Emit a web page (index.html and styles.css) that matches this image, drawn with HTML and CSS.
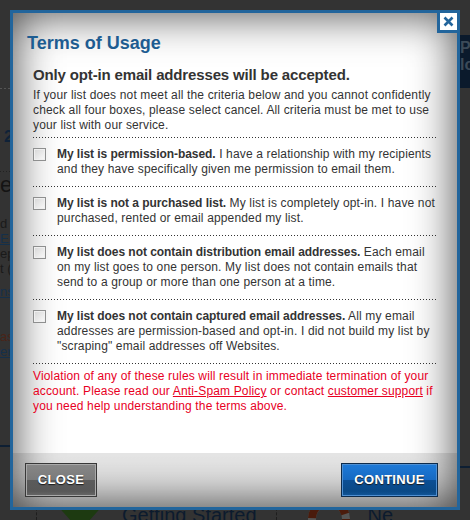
FILE: index.html
```html
<!DOCTYPE html>
<html lang="en">

<head>
    <meta charset="UTF-8">
    <meta name="viewport" content="width=device-width, initial-scale=1.0">
    <title>Terms of Usage</title>
    <link rel="stylesheet" href="styles.css">
</head>

<body>
    <!-- page under the dialog (dimmed) -->
    <div class="page">
        <div class="page-main">
            <div class="side">
                <div class="side-rule"></div>
                <div class="side-num">2 Campaigns</div>
                <div class="side-rule side-rule-dark"></div>
                <div class="side-title">essages</div>
                <p class="side-text">d them to your<br><a href="#">Export</a> list<br>ep a copy<br>t (see</p>
                <p class="side-text side-link"><a href="#">nstructions</a></p>
                <p class="side-text side-warn">ased lists are not<br><a href="#">ermission</a></p>
                <div class="side-rule side-rule-navy"></div>
            </div>
            <div class="aside">
                <div class="promo">P<br>lo</div>
                <div class="aside-rule"></div>
            </div>
        </div>
        <div class="page-foot">
            <span class="foot-sep"></span>
            <svg class="foot-arrow" width="50" height="30" viewBox="0 0 50 30">
                <polygon points="0,0 50,0 25,28" fill="#1d3a11" />
            </svg>
            <span class="foot-title">Getting Started</span>
            <span class="foot-sep foot-sep-2"></span>
            <svg class="foot-ring" width="44" height="44" viewBox="0 0 44 44">
                <circle cx="22" cy="22" r="17" fill="none" stroke="#555" stroke-width="8" />
                <circle cx="22" cy="22" r="17" fill="none" stroke="#4a1b0c" stroke-width="8"
                    stroke-dasharray="20 7" />
            </svg>
            <span class="foot-title">Ne</span>
        </div>
    </div>

    <!-- dialog -->
    <div class="modal">
        <a href="#" class="modal-x">
            <svg width="17" height="17" viewBox="0 0 17 17">
                <path d="M4.5 4.5 L12.5 12.5 M12.5 4.5 L4.5 12.5" stroke="#22659c" stroke-width="2.6" />
            </svg>
        </a>
        <div class="modal-body">
            <h2 class="modal-title">Terms of Usage</h2>
            <div class="terms">
                <h3 class="terms-lead">Only opt-in email addresses will be accepted.</h3>
                <p class="terms-intro">If your list does not meet all the criteria below and you cannot confidently
                    check all four boxes, please select cancel. All criteria must be met to use your list with our
                    service.</p>
                <label class="terms-item">
                    <input type="checkbox">
                    <span><b>My list is permission-based.</b> I have a relationship with my recipients and they have
                        specifically given me permission to email them.</span>
                </label>
                <label class="terms-item">
                    <input type="checkbox">
                    <span><b>My list is not a purchased list.</b> My list is completely opt-in. I have not
                        purchased, rented or email appended my list.</span>
                </label>
                <label class="terms-item">
                    <input type="checkbox">
                    <span><b>My list does not contain distribution email addresses.</b> Each email on my list goes
                        to one person. My list does not contain emails that send to a group or more than one person
                        at a time.</span>
                </label>
                <label class="terms-item">
                    <input type="checkbox">
                    <span><b>My list does not contain captured email addresses.</b> All my email addresses are
                        permission-based and opt-in. I did not build my list by "scraping" email addresses off
                        Websites.</span>
                </label>
                <p class="terms-warn">Violation of any of these rules will result in immediate termination of your
                    account. Please read our <a href="#">Anti-Spam Policy</a> or contact <a href="#">customer
                        support</a> if you need help understanding the terms above.</p>
            </div>
        </div>
        <div class="modal-foot">
            <a href="#" class="btn btn-close">CLOSE</a>
            <a href="#" class="btn btn-continue">CONTINUE</a>
        </div>
    </div>
</body>

</html>
```

FILE: styles.css
```css
* {
    margin: 0;
    padding: 0;
}

body {
    background-color: #333;
    font-family: "Liberation Sans", Arial, sans-serif;
    font-size: 12px;
    color: #333;
}

a {
    color: inherit;
}

/* page under the dialog */

.page {
    width: 470px;
    height: 520px;
    overflow: hidden;
}

.page-main {
    height: 503px;
    display: flex;
    justify-content: space-between;
}

.side {
    width: 200px;
    padding-top: 88px;
}

.side-rule {
    height: 1px;
    background: linear-gradient(to right, #555 2px, transparent 2px) 0 0 / 4px 1px repeat-x;
}

.side-rule-dark {
    margin-top: 24px;
    background-image: linear-gradient(to right, #222 1px, transparent 1px);
    background-size: 3px 1px;
}

.side-rule-navy {
    margin-top: 86px;
    height: 2px;
    background: #0e1f33;
}

.side-num {
    margin-top: 38px;
    font-size: 16px;
    font-weight: bold;
    line-height: 20px;
    color: #0f2238;
    padding-left: 4px;
}

.side-title {
    font-size: 22px;
    line-height: 26px;
    color: #141414;
}

.side-text {
    line-height: 15px;
    font-size: 13px;
    color: #1a1a1a;
    margin-top: 18px;
}

.side-text a {
    color: #15304a;
}

.side-link {
    margin-top: 8px;
}

.side-warn {
    margin-top: 30px;
    color: #4a2418;
}

.aside {
    width: 14px;
    padding-top: 35px;
}

.promo {
    height: 53px;
    background-color: #0b1a2c;
    color: #3c4a58;
    font-size: 16px;
    font-weight: bold;
    line-height: 17px;
    padding: 4px 0 0 4px;
    box-sizing: border-box;
    white-space: nowrap;
    overflow: hidden;
}

.aside-rule {
    margin-top: 378px;
    height: 2px;
    background: #0e1f33;
}

.page-foot {
    display: flex;
    align-items: flex-start;
    height: 17px;
    overflow: hidden;
}

.foot-sep {
    width: 0;
    height: 17px;
    margin-left: 36px;
    border-left: 1px dashed #1e1e1e;
}

.foot-sep-2 {
    margin-left: 19px;
}

.foot-arrow {
    margin-left: 18px;
}

.foot-title {
    margin-left: 17px;
    font-size: 20px;
    line-height: 24px;
    color: #0c1b2e;
    white-space: nowrap;
}

.foot-ring {
    margin-left: 30px;
    margin-top: -6px;
}

/* dialog */

.modal {
    position: absolute;
    left: 10px;
    top: 10px;
    width: 450px;
    height: 500px;
    box-sizing: border-box;
    border: 3px solid #22659c;
    background-color: #fff;
    box-shadow: inset 0 0 45px rgba(0, 0, 0, .75);
    display: flex;
    flex-direction: column;
}

.modal-x {
    position: absolute;
    top: -3px;
    right: -3px;
    width: 17px;
    height: 17px;
    border: 3px solid #22659c;
    background-color: #fff;
}

.modal-x svg {
    display: block;
}

.modal-body {
    flex: 1;
    padding: 19px 20px 0 14px;
}

.modal-title {
    font-size: 18px;
    line-height: 22px;
    color: #1d5c91;
}

.terms {
    padding-left: 6px;
}

.terms-lead {
    margin-top: 12px;
    font-size: 15px;
    line-height: 18px;
    letter-spacing: -0.15px;
    color: #333;
}

.terms-intro {
    margin: 4px 0 4px;
    line-height: 15px;
    letter-spacing: 0.15px;
}

.terms-item {
    display: flex;
    gap: 11px;
    padding: 10px 0 9px;
    line-height: 15px;
    letter-spacing: 0.15px;
    background: linear-gradient(to right, #333 1px, transparent 1px) 0 0 / 3px 1px repeat-x;
}

.terms-item b {
    letter-spacing: -0.05px;
}

.terms-item input {
    -webkit-appearance: none;
    appearance: none;
    flex: none;
    width: 13px;
    height: 13px;
    margin-top: 1px;
    border: 1px solid #8e8f8f;
    background: linear-gradient(135deg, #d6d6d6, #fafafa);
    box-shadow: inset 0 0 0 1px #f0f0f0;
}

.terms-warn {
    padding-top: 6px;
    line-height: 15px;
    letter-spacing: 0.15px;
    color: #e8001f;
    background: linear-gradient(to right, #333 1px, transparent 1px) 0 0 / 3px 1px repeat-x;
}

.modal-foot {
    height: 54px;
    box-sizing: border-box;
    padding: 10px 19px 10px 12px;
    display: flex;
    justify-content: space-between;
    background: linear-gradient(rgba(0, 0, 0, .1), rgba(0, 0, 0, .14));
}

.btn {
    display: block;
    height: 34px;
    box-sizing: border-box;
    border: 1px solid #383838;
    box-shadow: inset 0 0 0 1px #a9a9a9;
    background: linear-gradient(#878787, #7a7a7a 50%, #5b5b5b 50%, #585858 85%, #686868);
    color: #fff;
    font-size: 13px;
    font-weight: bold;
    line-height: 32px;
    letter-spacing: 0.3px;
    text-align: center;
    text-decoration: none;
    text-shadow: 0 1px 1px #1a1a1a;
}

.btn-close {
    width: 72px;
}

.btn-continue {
    width: 97px;
    border-color: #0d2b4b;
    box-shadow: inset 0 0 0 1px #4e8fd2;
    background: linear-gradient(#1e7ad8, #1669c2 50%, #0b4f95 50%, #0a4986 85%, #13579a);
}
```
